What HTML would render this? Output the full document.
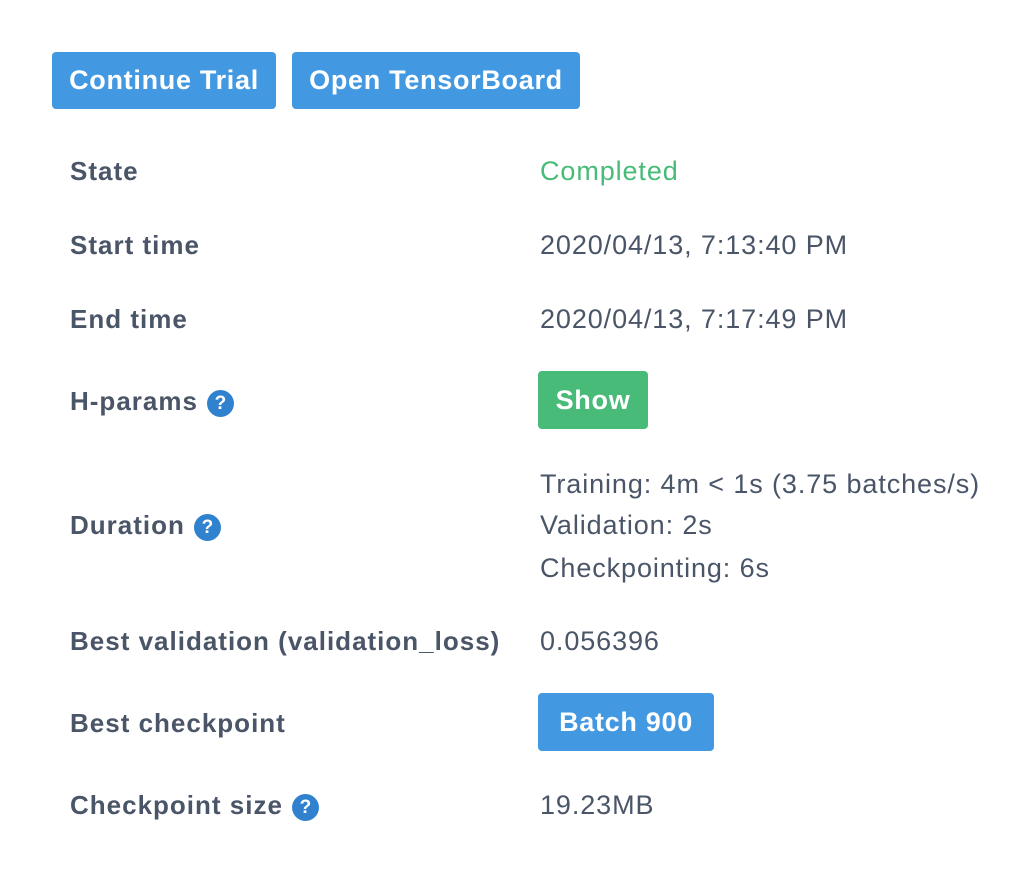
<!DOCTYPE html>
<html><head><meta charset="utf-8"><style>
body{margin:0;width:1030px;height:890px;background:#fff;font-family:"Liberation Sans",sans-serif;color:#4a5568;position:relative;overflow:hidden}
.t{position:absolute;line-height:40px;height:40px;white-space:nowrap}
.l{left:70px;font-weight:bold;font-size:26px;letter-spacing:1px}
.v{left:540px;font-size:27px;letter-spacing:0.9px}
.b{position:absolute;color:#fff;font-weight:bold;font-size:27px;letter-spacing:0.7px;border-radius:4px;text-align:center;box-sizing:border-box}
.q{display:inline-block;width:27px;height:27px;border-radius:50%;background:#3182ce;color:#fff;font-size:19px;letter-spacing:0;line-height:27px;text-align:center;vertical-align:1px;margin-left:9px;font-weight:bold}
</style></head><body>
<div class="b" style="left:52px;top:52px;width:224px;height:57px;line-height:57px;background:#4299e1">Continue Trial</div>
<div class="b" style="left:292px;top:52px;width:288px;height:57px;line-height:57px;background:#4299e1">Open TensorBoard</div>

<div class="t l" style="top:151px">State</div>
<div class="t v" style="top:151px;color:#48bb78">Completed</div>

<div class="t l" style="top:225px">Start time</div>
<div class="t v" style="top:225px">2020/04/13, 7:13:40 PM</div>

<div class="t l" style="top:299px">End time</div>
<div class="t v" style="top:299px">2020/04/13, 7:17:49 PM</div>

<div class="t l" style="top:381px">H-params<span class="q">?</span></div>
<div class="b" style="left:538px;top:371px;width:110px;height:58px;line-height:58px;background:#48bb78">Show</div>

<div class="t l" style="top:505px">Duration<span class="q">?</span></div>
<div class="t v" style="top:464px">Training: 4m &lt; 1s (3.75 batches/s)</div>
<div class="t v" style="top:505px">Validation: 2s</div>
<div class="t v" style="top:548px">Checkpointing: 6s</div>

<div class="t l" style="top:621px">Best validation (validation_loss)</div>
<div class="t v" style="top:621px">0.056396</div>

<div class="t l" style="top:703px">Best checkpoint</div>
<div class="b" style="left:538px;top:693px;width:176px;height:58px;line-height:58px;background:#4299e1">Batch 900</div>

<div class="t l" style="top:785px">Checkpoint size<span class="q">?</span></div>
<div class="t v" style="top:785px">19.23MB</div>
</body></html>
